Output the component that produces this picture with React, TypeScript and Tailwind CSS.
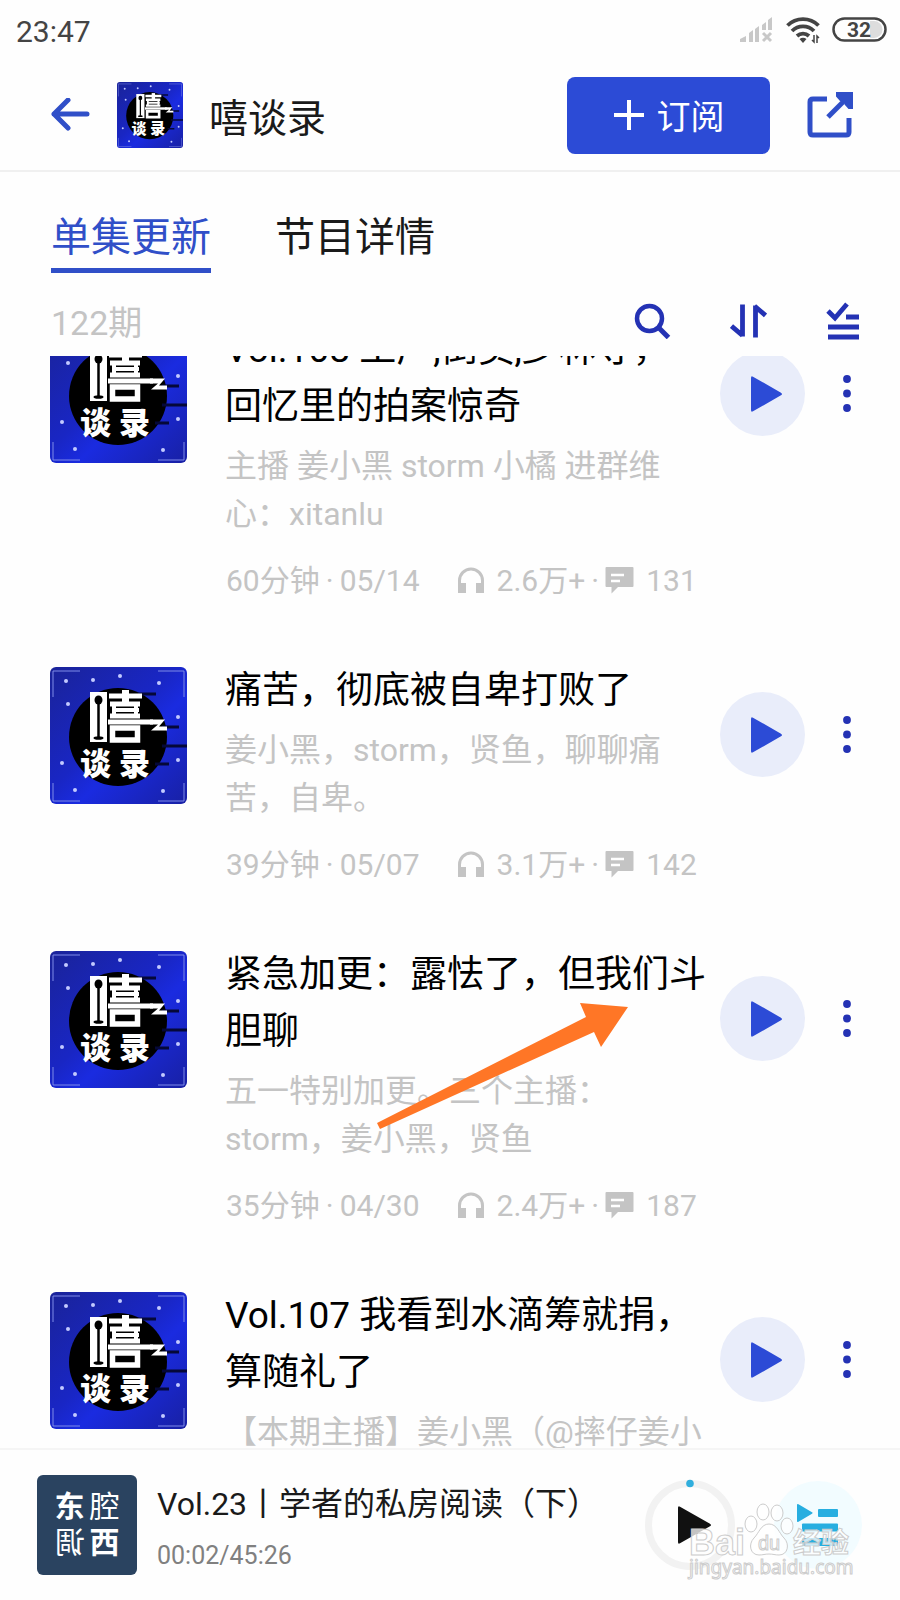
import React from "react";

type Episode = {
  title: string;
  summary: string;
  length: string;
  date: string;
  plays: string;
  comments: string;
};

const episodes: Episode[] = [
  {
    title: "Vol.108 工厂,倒卖,少林寺，\n回忆里的拍案惊奇",
    summary: "主播 姜小黑 storm 小橘 进群维\n心：xitanlu",
    length: "60分钟",
    date: "05/14",
    plays: "2.6万+",
    comments: "131",
  },
  {
    title: "痛苦，彻底被自卑打败了",
    summary: "姜小黑，storm，贤鱼，聊聊痛\n苦，自卑。",
    length: "39分钟",
    date: "05/07",
    plays: "3.1万+",
    comments: "142",
  },
  {
    title: "紧急加更：露怯了，但我们斗\n胆聊",
    summary: "五一特别加更。三个主播：\nstorm，姜小黑，贤鱼",
    length: "35分钟",
    date: "04/30",
    plays: "2.4万+",
    comments: "187",
  },
  {
    title: "Vol.107 我看到水滴筹就捐，\n算随礼了",
    summary: "【本期主播】姜小黑（@摔仔姜小",
    length: "42分钟",
    date: "04/23",
    plays: "2.8万+",
    comments: "165",
  },
];

const stars = [
  [16, 14], [43, 13], [70, 9], [109, 16], [18, 37], [128, 50],
  [128, 93], [12, 96], [25, 123], [113, 124],
];

function Cover({ className }: { className: string }) {
  return (
    <svg viewBox="0 0 137 137" className={className} role="img" aria-label="嘻谈录封面">
      <defs>
        <linearGradient id="night" x1="0" y1="0" x2="1" y2="1">
          <stop offset="0" stopColor="#1a2399" />
          <stop offset="0.45" stopColor="#1926c4" />
          <stop offset="0.6" stopColor="#1a2be0" />
          <stop offset="1" stopColor="#1820a4" />
        </linearGradient>
      </defs>
      <rect width="137" height="137" rx="6" fill="url(#night)" />
      <path d="M3 30V4H30M108 4h26v26M3 116v18h27M108 134h26v-18" fill="none" stroke="#7f8be8" strokeWidth="1" />
      <circle cx="68" cy="70" r="49" fill="#000" />
      <path d="M88 27h18M112 60h17M112 79h25M105 97h14" stroke="#050838" strokeWidth="3" />
      {stars.map(([x, y]) => (
        <circle key={`${x}-${y}`} cx={x} cy={y} r="2" fill="#c3caff" />
      ))}
      <path d="M40 25h17v50H40z" fill="#fff" />
      <path d="M48.500 33v37" stroke="#000" strokeWidth="2.500" />
      <ellipse cx="48.500" cy="33" rx="4" ry="4.500" fill="#000" />
      <ellipse cx="48.500" cy="71" rx="5" ry="1.800" fill="#000" />
      <g fill="none" stroke="#fff">
        <path d="M59 29h33M60 37h30M60 49h30" strokeWidth="5" />
        <path d="M75.500 23v15" strokeWidth="7" />
        <path d="M64 37v13M86 37v13M62 43h27" strokeWidth="4" />
        <path d="M58 55h45" strokeWidth="5" />
        <path d="M62.500 61h25v12h-25z" strokeWidth="5.500" />
      </g>
      <path d="M100 52.500h15l-6 7h8v4h-16l7-6h-8z" fill="#fff" />
      <text x="30" y="108" fontSize="31" fontWeight="900" fill="#fff" fontFamily="Noto Sans CJK SC, sans-serif">谈</text>
      <text x="69" y="108" fontSize="31" fontWeight="900" fill="#fff" fontFamily="Noto Sans CJK SC, sans-serif">录</text>
    </svg>
  );
}

function StatusBar() {
  return (
    <div className="flex h-[60px] items-center justify-between pr-[13px] pl-4 text-[#444]">
      <span className="pt-1 text-[30px] leading-[60px]">23:47</span>
      <div className="flex items-center gap-3">
        <svg width="34" height="26" viewBox="0 0 34 26" fill="#c8c8c8" aria-label="无信号">
          <path d="M0 25v-3l6-3v6zM9 16l4-3v12H9zM15 12l4-3v16h-4zM22 8l4-3v8l-4 0zM28 3l4-3v13h-4z" />
          <path d="M23 16l8 8M31 16l-8 8" stroke="#c8c8c8" strokeWidth="3" />
        </svg>
        <svg width="34" height="28" viewBox="0 0 34 28" fill="none" stroke="#444" strokeWidth="3.8" aria-label="无线网络">
          <path d="M1.500 9.500a22 22 0 0 1 31 0M6 15a15.500 15.500 0 0 1 22 0M11 20a9 9 0 0 1 12 0" />
          <path d="M13.500 23q3.500-2.500 7 0l-3.500 4z" fill="#444" stroke="none" />
          <path d="M28 19v7l-2-2M31 27v-7l2 2" strokeWidth="1.500" />
        </svg>
        <svg width="55" height="26" viewBox="0 0 55 26" aria-label="电量 32">
          <path d="M38 4h4a8.500 8.500 0 0 1 0 17h-4z" fill="#ddd" />
          <rect x="1.500" y="1.500" width="52" height="22" rx="11" fill="none" stroke="#444" strokeWidth="2.500" />
          <text x="27" y="20" textAnchor="middle" fontSize="21" fontWeight="700" fill="#444" fontFamily="Roboto, sans-serif">32</text>
        </svg>
      </div>
    </div>
  );
}

function Header() {
  return (
    <header className="flex h-28 items-center border-b-2 border-[#f0f0f0] pr-[46px] pl-[50px]">
      <button aria-label="返回" className="mr-[27px]">
        <svg width="40" height="34" viewBox="0 0 40 34" fill="none" stroke="#304fc8" strokeWidth="5" strokeLinecap="round" strokeLinejoin="round">
          <path d="M37 16H4M18 2L4 16l14 14" />
        </svg>
      </button>
      <Cover className="size-[66px]" />
      <h1 className="ml-[26px] pt-2 text-[39px] leading-[66px] text-[#1a1a1a]">嘻谈录</h1>
      <button className="ml-auto flex h-[77px] w-[203px] items-center justify-center gap-3 rounded-lg bg-[#2c4bd6] text-[34px] text-white">
        <svg width="32" height="32" viewBox="0 0 32 32" stroke="#fff" strokeWidth="4">
          <path d="M16 1v30M1 16h30" />
        </svg>
        <span className="pt-1">订阅</span>
      </button>
      <button aria-label="分享" className="ml-9">
        <svg width="48" height="48" viewBox="0 0 48 48" fill="none" stroke="#304fc8" strokeWidth="5">
          <path d="M21 8H7q-3 0-3 3v30q0 3 3 3h33q3 0 3-3V27" />
          <path d="M22 26L42 6" />
          <path d="M30 1h17v17h-4.500l-4-4.500V10H34l-4-4.500z" fill="#304fc8" stroke="none" />
        </svg>
      </button>
    </header>
  );
}

function Tabs() {
  return (
    <nav className="flex gap-16 px-[51px] pt-[34px] text-[40px] leading-[64px]">
      <a href="#episodes" aria-current="page" className="h-[67px] border-b-[5px] border-[#304fc8] text-[#304fc8]">单集更新</a>
      <a href="#about" className="text-[#1a1a1a]">节目详情</a>
    </nav>
  );
}

function Toolbar() {
  return (
    <div className="flex h-[83px] items-center pt-3 pr-10 pl-[51px]">
      <span className="mr-auto pt-1 text-[34px] leading-[44px] text-[#c4c4c4]">122期</span>
      <div className="flex items-center gap-[59px]">
        <button aria-label="搜索">
          <svg width="37" height="36" viewBox="0 0 37 36" fill="none" stroke="#2432b4" strokeWidth="4.500">
            <circle cx="15.500" cy="15.500" r="12.500" />
            <path d="M24 24l10.500 10.500" strokeWidth="5" />
          </svg>
        </button>
        <button aria-label="排序">
          <svg width="37" height="36" viewBox="0 0 37 36" fill="none" stroke="#2432b4" strokeWidth="4.800">
            <path d="M12.500 1.500v32M1.500 23l11 9.500M25.500 34.500v-32M24.500 3l11 9.500" />
          </svg>
        </button>
        <button aria-label="批量选择">
          <svg width="34" height="38" viewBox="0 0 34 38" fill="none" stroke="#2432b4" strokeWidth="4.800">
            <path d="M2 9l7 7L21 2M20 15h13M2 25h31M2 35h31" />
          </svg>
        </button>
      </div>
    </div>
  );
}

function EpisodeRow({ episode }: { episode: Episode }) {
  return (
    <li className="flex items-start pr-8 pb-[57px] pl-[50px]">
      <Cover className="mt-[7px] size-[137px] shrink-0" />
      <div className="ml-[38px] min-w-0 flex-1 pt-[2px] whitespace-pre">
        <h2 className="text-[37px] leading-[57px] text-black">{episode.title}</h2>
        <p className="mt-[7px] text-[32px] leading-[48px] text-[#c4c4c4]">{episode.summary}</p>
        <div className="mt-[21px] flex h-11 items-center pl-px text-[30px] leading-[44px] text-[#c4c4c4]">
          <span>{episode.length}</span>
          <span className="w-5 text-center">·</span>
          <span>{episode.date}</span>
          <svg className="ml-[37px]" width="28" height="28" viewBox="0 0 28 28" fill="#c4c4c4" aria-label="播放量">
            <path d="M2.500 18v-4.500a11.500 11.500 0 0 1 23 0V18" fill="none" stroke="#c4c4c4" strokeWidth="3" />
            <path d="M1 16h8v10H1zM19 16h8v10h-8z" />
          </svg>
          <span className="ml-3">{episode.plays}</span>
          <span className="w-5 text-center">·</span>
          <svg width="29" height="28" viewBox="0 0 29 28" aria-label="评论数">
            <path d="M1.500 0h26q1 0 1 1v18q0 1-1 1H13l-6.500 6.500V20h-5q-1 0-1-1V1q0-1 1-1z" fill="#c4c4c4" />
            <path d="M6 8h13M6 14h9" stroke="#fff" strokeWidth="2.500" />
          </svg>
          <span className="ml-3">{episode.comments}</span>
        </div>
      </div>
      <div className="mt-8 flex items-center gap-3">
        <button aria-label="播放" className="flex size-[85px] items-center justify-center rounded-full bg-[#e9edfa]">
          <svg className="ml-2" width="32" height="36" viewBox="0 0 32 36" fill="#2c4bd6">
            <path d="M0 2q0-2.500 2-1.300L30 16.700q2 1.300 0 2.600L2 35.300Q0 36.500 0 34z" />
          </svg>
        </button>
        <button aria-label="更多" className="flex w-[51px] justify-center">
          <svg className="ml-2" width="8" height="38" viewBox="0 0 8 38" fill="#2432b4">
            <circle cx="4" cy="4" r="3.900" />
            <circle cx="4" cy="18.500" r="3.900" />
            <circle cx="4" cy="33" r="3.900" />
          </svg>
        </button>
      </div>
    </li>
  );
}

function Watermark() {
  return (
    <svg className="pointer-events-none absolute right-[44px] bottom-[16px]" width="170" height="86" viewBox="0 0 170 86" fill="#fff" fillOpacity="0.75" stroke="#ccc" strokeWidth="1" aria-hidden="true">
      <ellipse cx="65" cy="26" rx="6" ry="8" />
      <ellipse cx="77" cy="14" rx="6" ry="8" />
      <ellipse cx="91" cy="15" rx="6" ry="8" />
      <ellipse cx="101" cy="28" rx="6" ry="8" />
      <path d="M83 26c8 0 10 9 15 14 6 6 4 17-5 17-4 0-6-1-10-1s-6 1-10 1c-9 0-11-11-5-17 5-5 7-14 15-14z" />
      <text x="3" y="57" fontSize="36" fontWeight="700" fontFamily="Liberation Sans, sans-serif">Bai</text>
      <text x="72" y="52" fontSize="20" fontFamily="Liberation Sans, sans-serif">du</text>
      <text x="107" y="55" fontSize="28" fontWeight="700" fontFamily="Noto Sans CJK SC, sans-serif">经验</text>
      <text x="3" y="76" fontSize="19" fontFamily="Noto Sans, sans-serif">jingyan.baidu.com</text>
    </svg>
  );
}

function Player() {
  return (
    <footer className="relative flex h-[152px] shrink-0 items-center border-t-2 border-[#f5f5f5] pr-[38px] pl-[37px]">
      <div className="grid size-[100px] shrink-0 grid-cols-2 content-center justify-items-center rounded-md bg-[#2a4360] px-[15px] text-[30px] leading-[36px] text-white">
        <span className="font-bold">东</span>
        <span>腔</span>
        <span className="-scale-x-100">调</span>
        <span className="font-bold">西</span>
      </div>
      <div className="ml-5 flex-1 pt-[5px] whitespace-nowrap">
        <p className="text-[32px] leading-[48px] text-[#1a1a1a]">Vol.23丨学者的私房阅读（下）</p>
        <p className="mt-2 text-[25px] leading-[40px] text-[#808080]">00:02/45:26</p>
      </div>
      <button aria-label="继续播放" className="mr-[38px]">
        <svg width="92" height="92" viewBox="0 0 92 92">
          <circle cx="46" cy="46" r="41.500" fill="none" stroke="#f2f2f2" strokeWidth="7" />
          <circle cx="46" cy="4.500" r="3.800" fill="#30aedd" />
          <path d="M34 29q0-2.500 2-1.300L66 44.700q2 1.300 0 2.600L36 64.300q-2 1.200-2-1.300z" fill="#111" />
        </svg>
      </button>
      <button aria-label="播放列表" className="flex size-[88px] items-center justify-center rounded-full bg-[#f2fcff]">
        <svg width="42" height="42" viewBox="0 0 42 42" fill="#27aee0">
          <path d="M0 1q0-1.500 1.500-.7L15 8.300q1.200.7 0 1.400L1.500 17.700Q0 18.500 0 17z" />
          <rect x="21" y="5" width="20" height="8" rx="1" />
          <rect x="5" y="19.500" width="36" height="8" rx="1" />
          <rect x="5" y="34" width="36" height="8" rx="1" />
        </svg>
      </button>
      <Watermark />
    </footer>
  );
}

export default function App() {
  return (
    <div className="relative flex h-screen flex-col bg-[#fefefe] font-[Roboto,'Noto_Sans_CJK_SC',sans-serif]">
      <StatusBar />
      <Header />
      <Tabs />
      <Toolbar />
      <main className="min-h-0 flex-1 overflow-hidden">
        <ul className="-mt-[37px]">
          {episodes.map((episode) => (
            <EpisodeRow key={episode.date} episode={episode} />
          ))}
        </ul>
      </main>
      <svg className="pointer-events-none absolute top-[1000px] left-[374px]" width="256" height="132" viewBox="0 0 256 132" fill="#ff7626" aria-hidden="true">
        <path d="M3 123L212 17l-6-14 48 4-27 40-7-15L6 129z" />
      </svg>
      <Player />
    </div>
  );
}
